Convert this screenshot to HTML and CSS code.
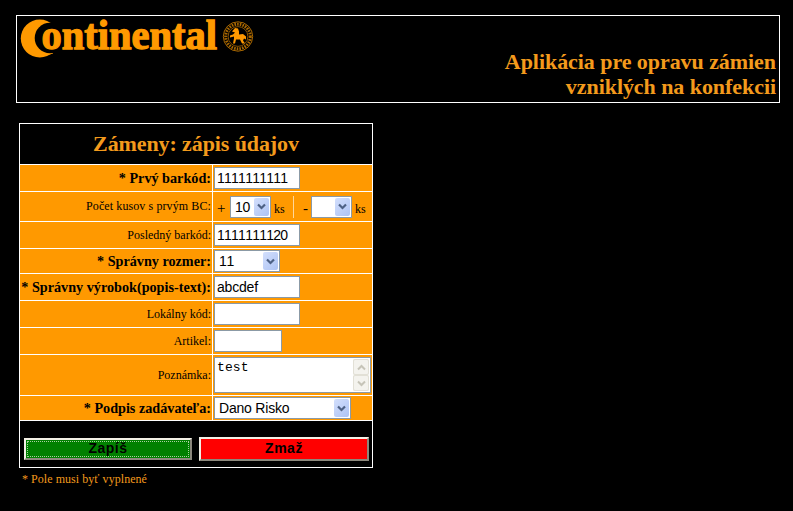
FILE: index.html
```html
<!DOCTYPE html>
<html lang="sk">
<head>
<meta charset="utf-8">
<title>Zámeny: zápis údajov</title>
<link rel="stylesheet" href="styles.css">
</head>
<body>
<header class="banner">
  <svg class="logo" width="240" height="46" viewBox="0 0 240 46" role="img" aria-label="Continental">
    <text class="logo-c" x="2" y="38.500" textLength="36" lengthAdjust="spacingAndGlyphs">C</text>
    <circle cx="20.800" cy="22.500" r="19"/>
    <circle cx="31" cy="22" r="15.300" fill="#000"/>
    <text class="logo-rest" x="22.500" y="33" textLength="175.500" lengthAdjust="spacingAndGlyphs">ontinental</text>
    <g transform="translate(219 20.500)">
      <circle r="14.700" fill="none" stroke="#a86700" stroke-width="1"/>
      <circle r="12.300" fill="none" stroke="#a86700" stroke-width="3" stroke-dasharray="1.600 1.100"/>
      <circle r="9.900" fill="#000" stroke="#a86700" stroke-width=".8"/>
      <path d="M-3-8.500L0-8L1-5L1-2L5-2.500L8 0L8 3L6 2L5 4L7 7H4L2 3L-2 3L-3 7H-5L-4 2L-4 0L-8 1V-1L-5-2L-3-4L-6-5Z"/>
    </g>
  </svg>
  <h1 class="banner-title">Aplikácia pre opravu zámien<br>vzniklých na konfekcii</h1>
</header>

<form class="entry">
  <h2 class="entry-title">Zámeny: zápis údajov</h2>

  <label class="label required">* Prvý barkód:</label>
  <div class="cell"><input class="box" value="1111111111"></div>

  <label class="label wide">Počet kusov s prvým BC:</label>
  <div class="cell counts">
    <span class="sign">+</span>
    <div class="box select w-count">10<span class="arrow"><svg width="9" height="7" viewBox="0 0 9 7"><path d="M1 1.500L4.500 5L8 1.500"/></svg></span></div>
    <span class="unit">ks</span>
    <span class="divider"></span>
    <span class="sign minus">-</span>
    <div class="box select w-count"><span class="arrow"><svg width="9" height="7" viewBox="0 0 9 7"><path d="M1 1.500L4.500 5L8 1.500"/></svg></span></div>
    <span class="unit">ks</span>
  </div>

  <label class="label">Posledný barkód:</label>
  <div class="cell"><input class="box" value="1111111120"></div>

  <label class="label required">* Správny rozmer:</label>
  <div class="cell"><div class="box select w-size">11<span class="arrow"><svg width="9" height="7" viewBox="0 0 9 7"><path d="M1 1.500L4.500 5L8 1.500"/></svg></span></div></div>

  <label class="label required">* Správny výrobok(popis-text):</label>
  <div class="cell"><input class="box text" value="abcdef"></div>

  <label class="label">Lokálny kód:</label>
  <div class="cell"><input class="box"></div>

  <label class="label">Artikel:</label>
  <div class="cell"><input class="box w-article"></div>

  <label class="label">Poznámka:</label>
  <div class="cell">
    <div class="box note"><span class="note-text">test</span>
      <div class="scroll">
        <span class="scroll-btn"><svg width="9" height="7" viewBox="0 0 9 7"><path d="M1 5.500L4.500 2L8 5.500"/></svg></span>
        <span class="scroll-btn"><svg width="9" height="7" viewBox="0 0 9 7"><path d="M1 1.500L4.500 5L8 1.500"/></svg></span>
      </div>
    </div>
  </div>

  <label class="label required">* Podpis zadávateľa:</label>
  <div class="cell"><div class="box select w-name">Dano Risko<span class="arrow"><svg width="9" height="7" viewBox="0 0 9 7"><path d="M1 1.500L4.500 5L8 1.500"/></svg></span></div></div>

  <div class="actions">
    <button class="btn save" type="button"><span>Zapíš</span></button>
    <button class="btn clear" type="button">Zmaž</button>
  </div>
</form>
<p class="footnote">* Pole musi byť vyplnené</p>
</body>
</html>
```
FILE: styles.css
```css
* { box-sizing: border-box; }
body {
  margin: 0;
  padding: 15px 13px 0 16px;
  background: #000;
  color: #000;
  font-family: "Liberation Serif", serif;
}
.banner {
  display: flex;
  justify-content: space-between;
  align-items: flex-end;
  height: 88px;
  padding: 0 3px 3px 2px;
  border: 1px solid #fff;
}
.logo { align-self: flex-start; overflow: visible; fill: #ff9900; font-weight: bold; }
.logo-c { font-size: 50px; }
.logo-rest { font-size: 42.500px; stroke: #ff9900; stroke-width: 1.300px; }
.banner-title {
  margin: 0;
  color: #f39a1c;
  font-size: 22px;
  line-height: 25px;
  letter-spacing: -0.060px;
  text-align: right;
}
.entry {
  display: grid;
  grid-template-columns: 192px 159px;
  grid-template-rows: 40px 26px 29px 26px 24px 26px 26px 26px 40px 24px 46px;
  gap: 1px;
  width: 354px;
  margin: 20px 0 0 3px;
  border: 1px solid #fff;
  background: #fff;
}
.entry-title {
  grid-column: 1 / 3;
  margin: 0;
  background: #000;
  color: #f39a1c;
  font-size: 22px;
  line-height: 39px;
  letter-spacing: -0.100px;
  text-align: center;
}
.label {
  display: flex;
  align-items: center;
  justify-content: flex-end;
  padding-right: 1px;
  background: #ff9900;
  font-size: 12px;
  white-space: nowrap;
}
.wide { letter-spacing: 0.100px; }
.required { font-size: 14.200px; font-weight: bold; }
.cell { display: flex; align-items: center; padding-left: 1px; background: #ff9900; }
.box {
  width: 86px;
  height: 22px;
  padding: 0 2px;
  border: 1px solid #8b9aa6;
  border-radius: 0;
  background: #fff;
  color: #000;
  font: 14px/20px "Liberation Sans", sans-serif;
  font-kerning: none;
  letter-spacing: -0.750px;
}
.text { letter-spacing: -0.200px; }
.select { display: flex; align-items: center; justify-content: space-between; padding: 0 1px 0 4px; letter-spacing: -0.400px; }
.arrow {
  display: flex;
  align-items: center;
  justify-content: center;
  width: 15px;
  height: 18px;
  margin-left: auto;
  border-radius: 2px;
  background: linear-gradient(135deg, #d3dffc, #adc3f4);
}
.arrow path { fill: none; stroke: #4d6185; stroke-width: 2.200; }
.w-count { width: 41px; }
.w-size { width: 66px; }
.w-article { width: 68px; }
.w-name { width: 137px; letter-spacing: -0.200px; }
.counts { padding-left: 4px; font-size: 12px; }
.sign { width: 13px; padding-top: 2px; font-size: 15px; line-height: 20px; }
.unit { width: 19px; padding: 6px 0 0 3px; }
.divider { width: 1px; height: 22px; margin: 0 9px 0 3px; background: #ffd79a; }
.minus { width: 8px; }
.note { display: flex; justify-content: space-between; width: 157px; height: 36px; padding: 1px; }
.note-text { padding-left: 1px; font: 13px/18px "Liberation Mono", monospace; letter-spacing: 0.100px; }
.scroll { display: flex; flex-direction: column; width: 16px; background: #f4f3ee; }
.scroll-btn {
  display: flex;
  flex: 1;
  align-items: center;
  justify-content: center;
  border: 1px solid #e2e0d6;
  border-radius: 2px;
}
.scroll-btn path { fill: none; stroke: #c6c4b8; stroke-width: 2; }
.actions { grid-column: 1 / 3; display: flex; align-items: center; gap: 7px; padding: 10px 3px 0 4px; background: #000; }
.btn {
  height: 24px;
  padding: 0 0 1px;
  border: 2px solid;
  border-color: #f3f0e6 #8c887c #8c887c #f3f0e6;
  border-radius: 0;
  color: #000;
  font: bold 14px/17px "Liberation Sans", sans-serif;
  letter-spacing: 0.500px;
}
.save { width: 168px; height: 22px; padding: 1px; background: #008000; }
.save span { display: block; height: 16px; border: 1px dotted #a9d0a0; line-height: 13px; }
.clear { width: 170px; background: #f00; }
.footnote { margin: 3px 0 0 6px; color: #f39a1c; font-size: 12px; line-height: 16px; letter-spacing: 0.050px; }
```
